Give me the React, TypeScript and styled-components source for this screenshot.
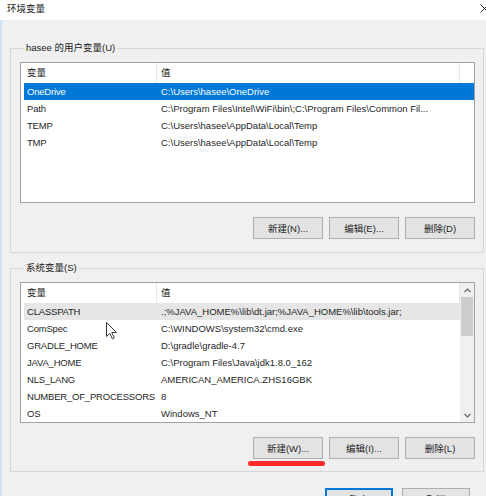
import React from 'react';
import styled, { createGlobalStyle } from 'styled-components';

const Global = createGlobalStyle`
  html, body { margin: 0; padding: 0; background: #f0f0f0; }
  body {
    font-family: "Liberation Sans", "Noto Sans CJK SC", sans-serif;
    font-size: 9.5px;
    color: #1f1f1f;
  }
  * { box-sizing: border-box; }
`;

const Window = styled.div`
  position: relative;
  width: 486px;
  height: 496px;
  overflow: hidden;
  background: #f0f0f0;
  display: flex;
  flex-direction: column;
`;

const TitleBar = styled.div`
  flex: none;
  height: 20px;
  background: #ffffff;
  display: flex;
  align-items: center;
  justify-content: space-between;
  padding: 0 0 4px 7px;
`;

const Title = styled.span`
  color: #1a1a1a;
`;

const Close = styled.svg`
  margin-right: -3px;
  width: 9px;
  height: 9px;
`;

const Body = styled.div`
  flex: 1;
  border-left: 2px solid #cfe3f4;
  padding: 28px 2px 0 8px;
  display: flex;
  flex-direction: column;
`;

const Group = styled.div<{ $top: number; $bottom: number }>`
  margin-top: ${p => p.$top}px;
  border: 1px solid #d7d7d7;
  padding: 0 8px ${p => p.$bottom}px 9px;
`;

const GroupLabel = styled.div`
  width: fit-content;
  margin: -9px 0 0 4px;
  padding: 0 2px;
  line-height: 16px;
  background: #f0f0f0;
  color: #1a1a1a;
`;

const ListBox = styled.div`
  margin-top: 6px;
  height: 141px;
  border: 1px solid #a2a2a2;
  background: #ffffff;
  display: flex;
  overflow: hidden;
`;

const ListMain = styled.div`
  flex: 1;
  min-width: 0;
  display: flex;
  flex-direction: column;
`;

const Header = styled.div`
  flex: none;
  display: grid;
  grid-template-columns: 136px 303px;
  height: 20px;
`;

const HeadCell = styled.div<{ $pad: number }>`
  padding-left: ${p => p.$pad}px;
  line-height: 20px;
  border-right: 1px solid #e8e8e8;
  color: #1a1a1a;
`;

const Row = styled.div<{ $state?: 'selected' | 'hover' }>`
  flex: none;
  display: grid;
  grid-template-columns: 133px 303px;
  margin-left: 3px;
  height: 17px;
  line-height: 17px;
  background: ${p =>
    p.$state === 'selected' ? '#0078d7' : p.$state === 'hover' ? '#e6e6e6' : 'transparent'};
  color: ${p => (p.$state === 'selected' ? '#ffffff' : '#1f1f1f')};
`;

const KeyCell = styled.div`
  padding-left: 3px;
  white-space: nowrap;
  letter-spacing: -0.2px;
  overflow: visible;
`;

const ValueCell = styled.div`
  padding-left: 4px;
  white-space: nowrap;
  overflow: hidden;
`;

const ScrollBar = styled.div`
  flex: none;
  width: 14px;
  background: #f0f0f0;
  display: flex;
  flex-direction: column;
`;

const ScrollArrow = styled.div`
  flex: none;
  height: 14px;
  display: flex;
  align-items: center;
  justify-content: center;
`;

const Thumb = styled.div`
  flex: none;
  height: 39px;
  margin: 0 1px;
  background: #cdcdcd;
`;

const Track = styled.div`
  flex: 1;
`;

const ButtonRow = styled.div`
  display: flex;
  justify-content: flex-end;
  gap: 6px;
  margin-top: 14px;
`;

const Button = styled.button<{ $primary?: boolean; $w?: number }>`
  width: ${p => p.$w ?? 70}px;
  height: 22px;
  padding: 0;
  border: 1px solid ${p => (p.$primary ? '#0078d7' : '#afafaf')};
  box-shadow: ${p => (p.$primary ? 'inset 0 0 0 1px #0078d7' : 'none')};
  background: #e3e3e3;
  font: inherit;
  color: #1f1f1f;
`;

const Marked = styled.span`
  position: relative;
  display: inline-flex;
`;

const RedMark = styled.span`
  position: absolute;
  left: -5px;
  top: 24px;
  width: 77px;
  height: 5px;
  border-radius: 3px;
  background: #ff2b2b;
`;

const DialogButtons = styled.div`
  display: flex;
  justify-content: flex-end;
  gap: 9px;
  margin-top: 16px;
  padding-right: 14px;
`;

const Cursor = styled.svg`
  position: absolute;
  left: 106px;
  top: 322px;
  width: 12px;
  height: 18px;
`;

type Item = [string, string];

const userVars: Item[] = [
  ['OneDrive', 'C:\\Users\\hasee\\OneDrive'],
  ['Path', 'C:\\Program Files\\Intel\\WiFi\\bin\\;C:\\Program Files\\Common Fil...'],
  ['TEMP', 'C:\\Users\\hasee\\AppData\\Local\\Temp'],
  ['TMP', 'C:\\Users\\hasee\\AppData\\Local\\Temp'],
];

const sysVars: Item[] = [
  ['CLASSPATH', '.;%JAVA_HOME%\\lib\\dt.jar;%JAVA_HOME%\\lib\\tools.jar;'],
  ['ComSpec', 'C:\\WINDOWS\\system32\\cmd.exe'],
  ['GRADLE_HOME', 'D:\\gradle\\gradle-4.7'],
  ['JAVA_HOME', 'C:\\Program Files\\Java\\jdk1.8.0_162'],
  ['NLS_LANG', 'AMERICAN_AMERICA.ZHS16GBK'],
  ['NUMBER_OF_PROCESSORS', '8'],
  ['OS', 'Windows_NT'],
];

const ListHeader = () => (
  <Header>
    <HeadCell $pad={6}>变量</HeadCell>
    <HeadCell $pad={4}>值</HeadCell>
  </Header>
);

const Rows = ({ items, active, state }: { items: Item[]; active: number; state: 'selected' | 'hover' }) => (
  <>
    {items.map(([k, v], i) => (
      <Row key={k} $state={i === active ? state : undefined}>
        <KeyCell>{k}</KeyCell>
        <ValueCell>{v}</ValueCell>
      </Row>
    ))}
  </>
);

const Chevron = ({ up }: { up?: boolean }) => (
  <svg width="7" height="5" viewBox="0 0 7 5">
    <polyline
      points={up ? '0.5,4 3.5,1 6.5,4' : '0.5,1 3.5,4 6.5,1'}
      fill="none"
      stroke="#606060"
      strokeWidth="1.1"
    />
  </svg>
);

export default function App() {
  return (
    <>
      <Global />
      <Window>
        <TitleBar>
          <Title>环境变量</Title>
          <Close viewBox="0 0 9 9">
            <path d="M0.5 0.5 L8.5 8.5 M8.5 0.5 L0.5 8.5" stroke="#222" strokeWidth="1" />
          </Close>
        </TitleBar>
        <Body>
          <Group $top={0} $bottom={13}>
            <GroupLabel>hasee 的用户变量(U)</GroupLabel>
            <ListBox>
              <ListMain>
                <ListHeader />
                <Rows items={userVars} active={0} state="selected" />
              </ListMain>
            </ListBox>
            <ButtonRow>
              <Button>新建(N)...</Button>
              <Button>编辑(E)...</Button>
              <Button>删除(D)</Button>
            </ButtonRow>
          </Group>

          <Group $top={15} $bottom={12}>
            <GroupLabel>系统变量(S)</GroupLabel>
            <ListBox>
              <ListMain>
                <ListHeader />
                <Rows items={sysVars} active={0} state="hover" />
              </ListMain>
              <ScrollBar>
                <ScrollArrow>
                  <Chevron up />
                </ScrollArrow>
                <Thumb />
                <Track />
                <ScrollArrow>
                  <Chevron />
                </ScrollArrow>
              </ScrollBar>
            </ListBox>
            <ButtonRow>
              <Marked>
                <Button>新建(W)...</Button>
                <RedMark />
              </Marked>
              <Button>编辑(I)...</Button>
              <Button>删除(L)</Button>
            </ButtonRow>
          </Group>

          <DialogButtons>
            <Button $primary $w={68}>确定</Button>
            <Button $w={68}>取消</Button>
          </DialogButtons>
        </Body>
        <Cursor viewBox="0 0 12 18">
          <path
            d="M0.5 0.5 L0.5 14.5 L3.8 11.3 L6.3 16.8 L8.3 15.9 L5.9 10.5 L10.5 10.5 Z"
            fill="#ffffff"
            stroke="#3a3a3a"
            strokeWidth="1"
            strokeLinejoin="round"
          />
        </Cursor>
      </Window>
    </>
  );
}
